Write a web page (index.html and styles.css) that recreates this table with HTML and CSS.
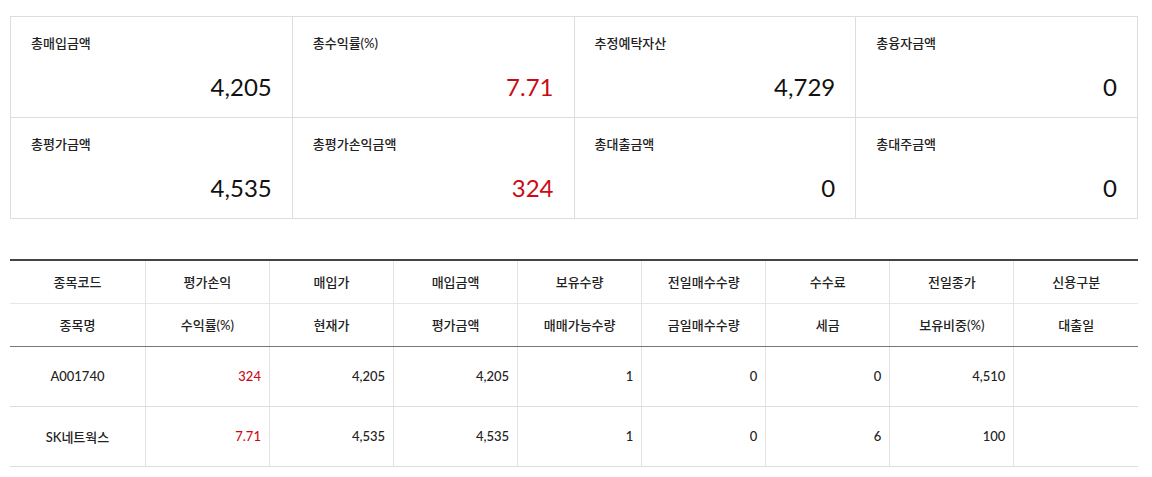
FILE: index.html
```html
<!DOCTYPE html>
<html lang="ko">
<head>
<meta charset="utf-8">
<link rel="stylesheet" href="styles.css">
</head>
<body>
<div class="page">
  <div class="summary">
    <div class="card"><div class="label">총매입금액</div><div class="value">4,205</div></div>
    <div class="card"><div class="label">총수익률(%)</div><div class="value red">7.71</div></div>
    <div class="card"><div class="label">추정예탁자산</div><div class="value">4,729</div></div>
    <div class="card"><div class="label">총융자금액</div><div class="value">0</div></div>
    <div class="card"><div class="label">총평가금액</div><div class="value">4,535</div></div>
    <div class="card"><div class="label">총평가손익금액</div><div class="value red">324</div></div>
    <div class="card"><div class="label">총대출금액</div><div class="value">0</div></div>
    <div class="card"><div class="label">총대주금액</div><div class="value">0</div></div>
  </div>

  <table class="grid">
    <colgroup>
      <col class="c-first">
      <col class="c"><col class="c"><col class="c"><col class="c">
      <col class="c"><col class="c"><col class="c"><col class="c">
    </colgroup>
    <thead>
      <tr class="h1">
        <th>종목코드</th><th>평가손익</th><th>매입가</th><th>매입금액</th><th>보유수량</th><th>전일매수수량</th><th>수수료</th><th>전일종가</th><th>신용구분</th>
      </tr>
      <tr class="h2">
        <th>종목명</th><th>수익률(%)</th><th>현재가</th><th>평가금액</th><th>매매가능수량</th><th>금일매수수량</th><th>세금</th><th>보유비중(%)</th><th>대출일</th>
      </tr>
    </thead>
    <tbody>
      <tr>
        <td class="ctr">A001740</td><td class="red">324</td><td>4,205</td><td>4,205</td><td>1</td><td>0</td><td>0</td><td>4,510</td><td></td>
      </tr>
      <tr>
        <td class="ctr">SK네트웍스</td><td class="red">7.71</td><td>4,535</td><td>4,535</td><td>1</td><td>0</td><td>6</td><td>100</td><td></td>
      </tr>
    </tbody>
  </table>
</div>
</body>
</html>
```

FILE: styles.css
```css
* { box-sizing: border-box; }
html, body { margin: 0; padding: 0; background: #fff; }
body {
  font-family: Lato, "Noto Sans CJK KR", sans-serif;
  color: #222;
  font-size: 13px;
  font-weight: 500;
}
.page { padding: 16px 14px 0 10px; }

.summary {
  display: grid;
  grid-template-columns: repeat(4, 1fr);
  width: 1128px;
  border-top: 1px solid #ddd;
  border-left: 1px solid #ddd;
}
.card {
  height: 101px;
  border-right: 1px solid #ddd;
  border-bottom: 1px solid #ddd;
  padding: 16px 20px 15px 20px;
  display: flex;
  flex-direction: column;
  justify-content: space-between;
}
.label { font-size: 13px; line-height: 20px; color: #222; }
.value {
  font-size: 24px;
  font-weight: 400;
  line-height: 30px;
  text-align: right;
  color: #111;
}
.red { color: #cc0a14 !important; }

.grid {
  margin-top: 40px;
  width: 1128px;
  border-collapse: collapse;
  table-layout: fixed;
  border-top: 2px solid #444;
}
.c-first { width: 12%; }
.c { width: 11%; }
.grid th {
  font-weight: 500;
  font-size: 13px;
  color: #222;
  text-align: center;
  padding: 0;
  border-left: 1px solid #e3e3e3;
}
.grid th:first-child, .grid td:first-child { border-left: none; }
.grid .h1 th { height: 43px; border-bottom: 1px solid #e6e6e6; }
.grid .h2 th { height: 43px; border-bottom: 1px solid #777; }
.grid td {
  height: 60px;
  text-align: right;
  padding: 0 8px;
  border-left: 1px solid #e3e3e3;
  border-bottom: 1px solid #ddd;
  font-size: 13px;
  color: #222;
}
.grid td.ctr { text-align: center; }
```
